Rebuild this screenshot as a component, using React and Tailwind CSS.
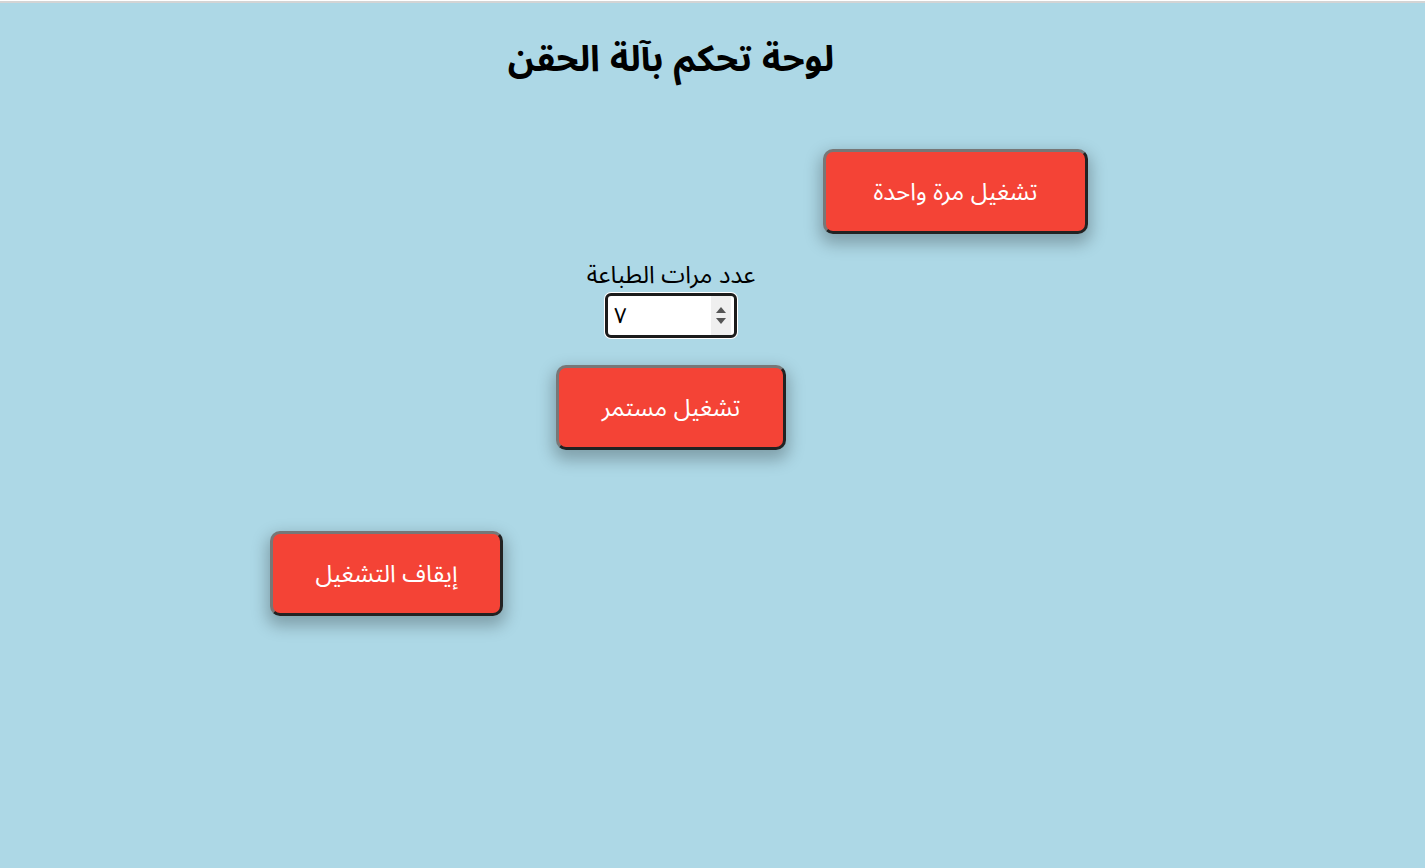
import React from 'react';

const arabic = { fontFamily: '"Liberation Sans", Arial, "Noto Sans Arabic", "DejaVu Sans", sans-serif' };

const RedButton = ({ children, width }) => (
    <button
        className={`${width} h-[85px] bg-[#f44336] text-white text-[24px] rounded-[10px] border-[3px] border-t-[#777777] border-l-[#777777] border-r-[#222222] border-b-[#222222] shadow-[0_7px_16px_3px_rgba(0,0,0,0.26)]`}
        style={arabic}
    >
        {children}
    </button>
);

const App = () => {
    return (
        <div className="min-h-[868px] w-full bg-[#add8e6] flex flex-col" style={arabic}>
            <div className="h-[1px] bg-white" />
            <div className="h-[2px] bg-[#d4d4d4]" />

            <div className="w-[1342px] flex flex-col">
                <h1 dir="rtl" className="text-center text-[36px] font-bold text-black mt-[29px] leading-[54px]">
                    لوحة تحكم بآلة الحقن
                </h1>

                <div className="flex pl-[823px] mt-[63px]">
                    <RedButton width="w-[265px]">تشغيل مرة واحدة</RedButton>
                </div>

                <div className="flex flex-col items-center mt-[26px]">
                    <label dir="rtl" className="text-[24px] leading-[30px] text-black">عدد مرات الطباعة</label>
                    <div className="mt-[3px] w-[132px] h-[45px] rounded-[6px] border-[3px] border-[#1c1c1c] ring-1 ring-white bg-white flex items-center pl-[6px]">
                        <input
                            type="text"
                            defaultValue="٧"
                            className="flex-1 min-w-0 h-full outline-none text-[22px] text-black bg-transparent"
                            style={arabic}
                        />
                        <div className="w-[20px] h-full bg-[#efefef] flex flex-col items-center justify-center gap-[5px] mr-[3px]">
                            <svg width="10" height="6" viewBox="0 0 10 6"><path d="M0 6 L5 0 L10 6 Z" fill="#555" /></svg>
                            <svg width="10" height="6" viewBox="0 0 10 6"><path d="M0 0 L5 6 L10 0 Z" fill="#555" /></svg>
                        </div>
                    </div>
                </div>

                <div className="flex pl-[556px] mt-[27px]">
                    <RedButton width="w-[230px]">تشغيل مستمر</RedButton>
                </div>

                <div className="flex pl-[270px] mt-[81px]">
                    <RedButton width="w-[233px]">إيقاف التشغيل</RedButton>
                </div>
            </div>
        </div>
    );
};

export default App;
